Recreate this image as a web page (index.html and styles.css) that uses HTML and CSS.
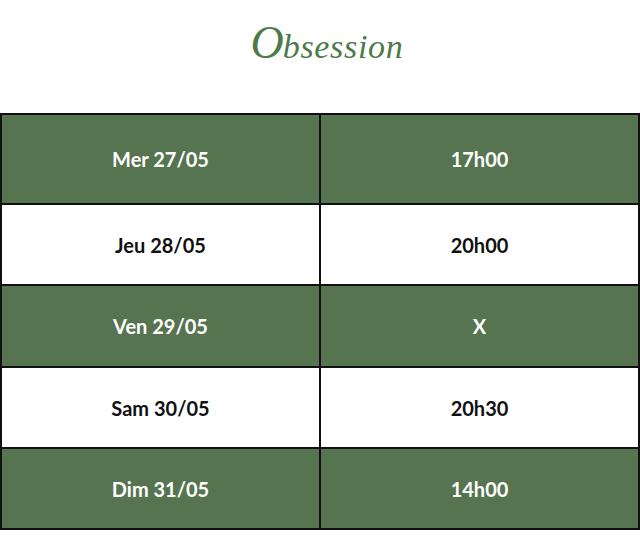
FILE: index.html
```html
<!DOCTYPE html>
<html lang="fr">
<head>
<meta charset="utf-8">
<title>Obsession</title>
<link rel="stylesheet" href="styles.css">
</head>
<body>
<header class="header">
  <h1 class="title"><span class="initial">O</span>bsession</h1>
</header>
<div class="schedule">
  <div class="cell green">Mer 27/05</div>
  <div class="cell green">17h00</div>
  <div class="cell white">Jeu 28/05</div>
  <div class="cell white">20h00</div>
  <div class="cell green">Ven 29/05</div>
  <div class="cell green">X</div>
  <div class="cell white">Sam 30/05</div>
  <div class="cell white">20h30</div>
  <div class="cell green">Dim 31/05</div>
  <div class="cell green">14h00</div>
</div>
</body>
</html>
```
FILE: styles.css
```css
html, body {
  margin: 0;
  padding: 0;
  background: #ffffff;
}
body {
  width: 640px;
  font-family: Lato, "Open Sans", sans-serif;
}
.header {
  height: 113px;
  display: flex;
  align-items: center;
  justify-content: center;
}
.title {
  margin: 0 0 0 14px;
  font-family: "Liberation Serif", "DejaVu Serif", serif;
  font-style: italic;
  font-weight: normal;
  font-size: 34px;
  line-height: 1;
  color: #4d7a49;
  letter-spacing: 0.7px;
  padding-bottom: 28px;
}
.initial {
  font-size: 46px;
  letter-spacing: -1px;
}
.schedule {
  display: grid;
  grid-template-columns: 1fr 1fr;
  grid-template-rows: 88px 79px 80px 79px 79px;
  gap: 2px;
  padding: 2px;
  background: #111111;
}
.cell {
  display: flex;
  align-items: center;
  justify-content: center;
  font-weight: bold;
  font-size: 20px;
}
.green {
  background: #56744f;
  color: #ffffff;
}
.white {
  background: #ffffff;
  color: #111111;
}
```
